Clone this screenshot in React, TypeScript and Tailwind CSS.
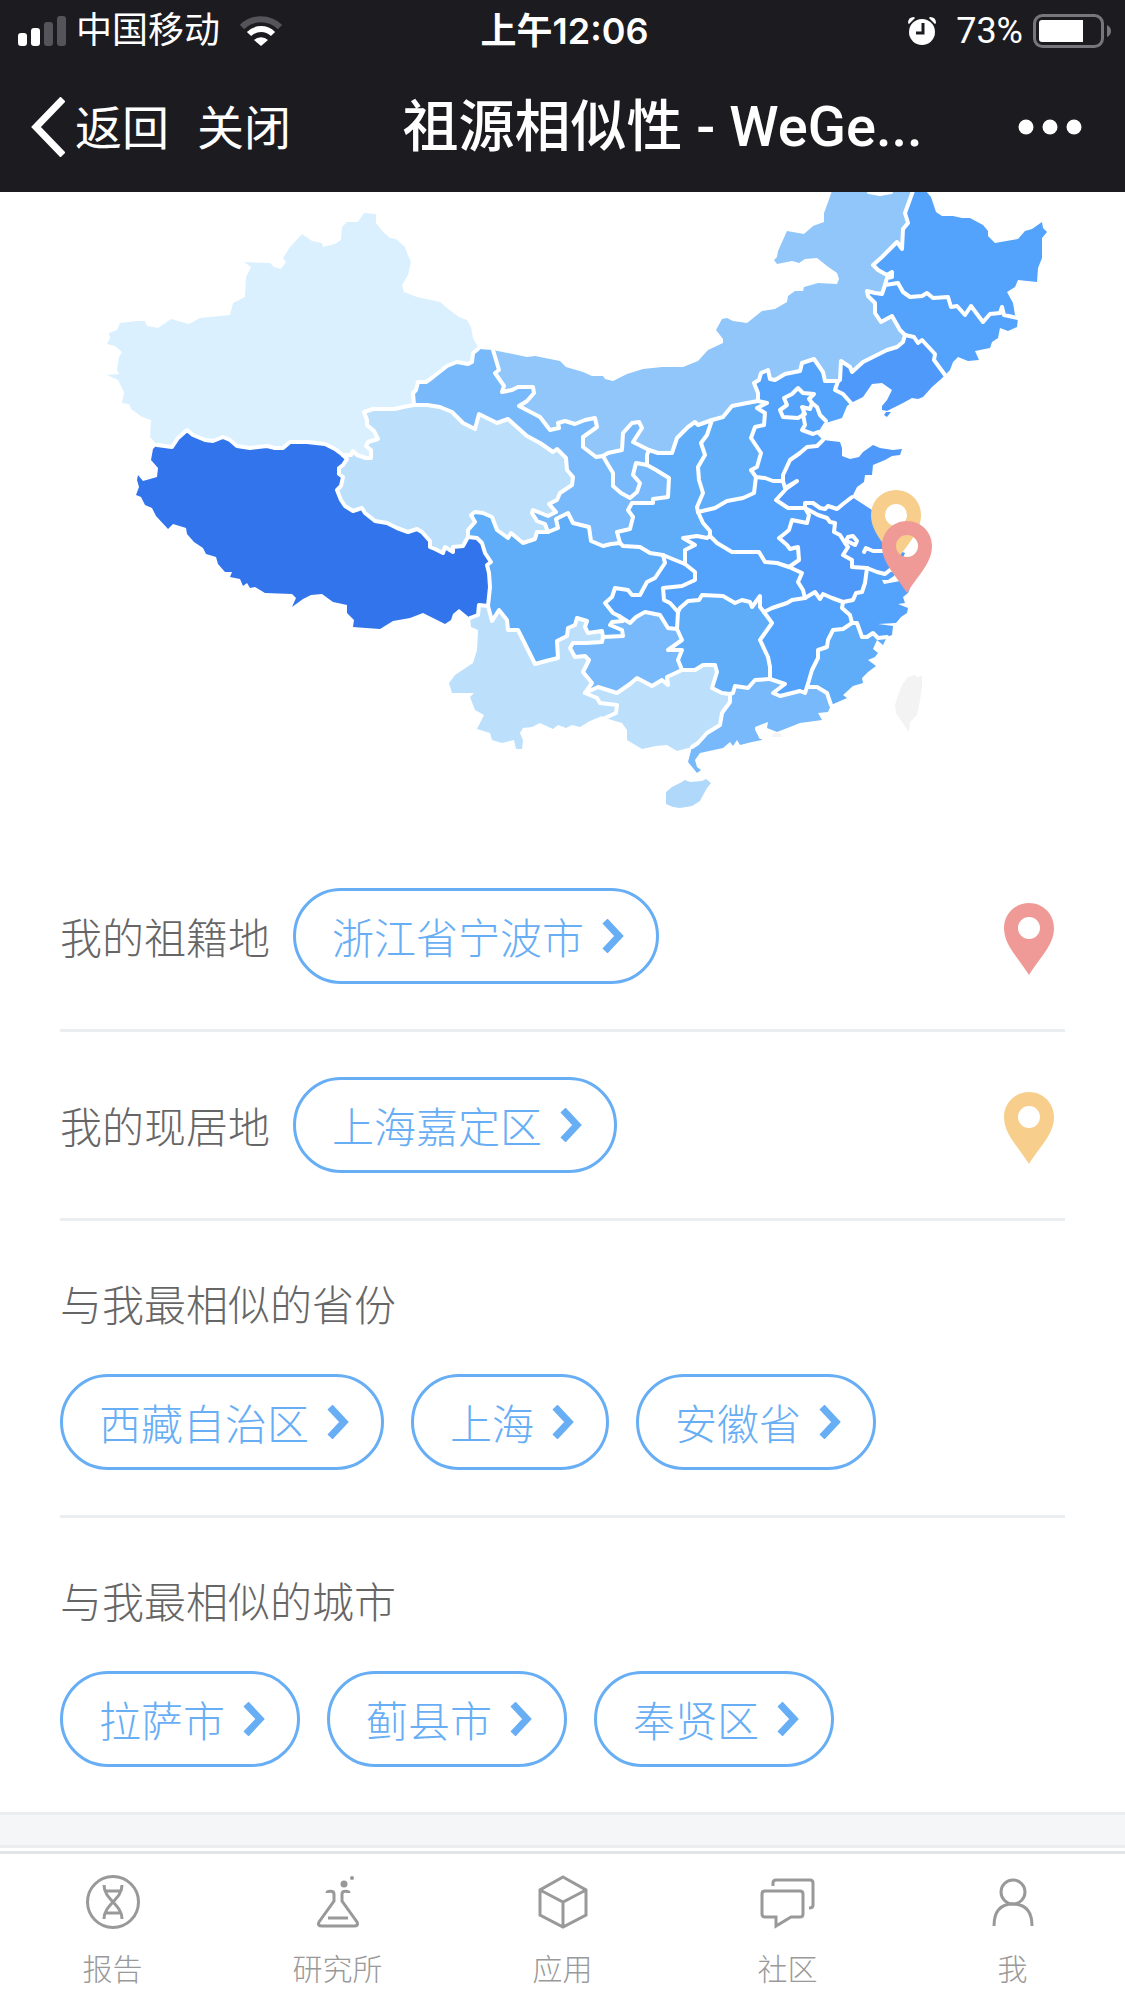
import type { ReactNode } from "react";

type ProvinceShape = {
  name: string;
  fill: string;
  ring: string[];
};

// Shared outlines: every border is written once and reused by both neighbours.
const ARCS: Record<string, string> = {
  "xj-out":
    "157,445 150,437 151,420 142,417 131,409 129,404 122,403 124,392 118,380 107,375 119,374 117,370 119,357 122,352 115,346 107,344 110,338 109,333 117,330 120,323 137,321 145,321 147,326 158,328 171,319 189,324 200,318 230,315 233,303 245,297 246,277 251,267 244,262 270,263 274,267 281,269 286,262 283,258 290,247 302,234 312,241 322,243 323,247 335,244 341,240 342,227 347,222 358,222 364,213 376,214 376,223 383,232 390,238 396,239 405,247 407,253 411,262 408,275 402,285 404,292 417,297 440,302 447,308 459,317 467,320 471,327 473,338 478,347",
  "xj-gs":
    "478,349 473,353 472,362 468,364 457,362 447,366 433,377 426,382 418,382 416,390 413,393 414,405",
  "xj-qh":
    "414,405 403,407 395,409 373,409 364,412 367,420 367,425 374,431 378,439 368,442 366,446 371,450 371,458 366,458 357,455 353,451 351,455 343,455",
  "xj-xz":
    "343,455 335,449 325,444 307,442 290,442 283,448 275,448 267,446 250,448 237,446 230,440 223,437 213,441 205,440 193,435 187,430 178,438 172,447 157,445",
  "xz-out":
    "157,445 153,449 151,460 158,468 157,477 143,481 138,475 137,480 139,487 136,495 141,497 145,505 152,508 156,516 168,529 173,524 186,528 187,534 194,542 203,548 206,554 216,557 218,564 225,572 232,572 230,577 240,579 243,586 247,583 250,588 255,587 265,593 292,594 296,598 292,607 303,599 311,595 322,594 333,602 347,605 347,613 354,620 353,627 366,628 380,629 393,621 410,618 423,613 445,624 451,620 453,614 459,609 470,618",
  "xz-yn": "470,618 478,615 479,605 488,606",
  "xz-sc": "488,606 490,587 489,573 487,565 491,562 485,553 482,543 477,538 468,537",
  "xz-qh":
    "468,537 463,546 453,547 453,552 445,547 443,553 435,549 430,547 430,541 422,532 417,529 408,532 397,528 387,523 375,521 365,513 362,508 353,511 345,506 341,500 337,490 341,486 343,477 339,474 339,468 343,465 347,459 343,455",
  "qh-gs":
    "414,405 427,405 440,407 452,412 463,423 475,429 479,414 497,423 508,419 518,428 527,436 540,443 553,452 557,449 566,458 567,470 573,477 572,485 560,493 557,500 549,504 556,512 548,516 533,510 532,513 537,521 545,524 548,532",
  "qh-sc":
    "548,532 537,532 535,539 523,543 517,538 511,533 508,538 497,530 492,517 483,513 475,512 471,515 475,522 468,530 468,537",
  "gs-sc":
    "548,532 558,528 556,519 568,513 573,523 589,527 591,541 603,546 611,544 620,543",
  "gs-sn":
    "620,543 617,532 630,529 633,517 628,510 632,503 640,503 653,503 653,499 668,497 669,478 656,470 647,465",
  "nx-sn": "647,465 647,455 649,450",
  "nx-gs":
    "647,465 636,463 633,475 640,483 637,492 630,498 621,493 613,486 613,473 607,463 603,456",
  "nm-nx":
    "603,456 608,453 622,450 623,433 632,423 639,422 642,428 633,442 649,450",
  "nm-gs":
    "493,350 499,370 495,373 504,386 502,392 512,390 518,387 533,387 534,393 527,401 519,406 540,417 550,430 559,428 558,423 565,421 575,424 585,420 595,418 597,427 583,437 583,447 596,457 603,456",
  "gs-out": "478,349 493,350",
  "nm-out":
    "493,350 527,357 535,356 560,361 566,367 583,372 592,376 603,376 605,379 613,381 627,374 643,369 662,367 683,367 698,361 708,350 723,343 723,339 716,330 722,319 727,318 733,321 747,323 762,311 775,309 787,302 788,296 795,291 803,291 804,287 818,283 837,284 839,279 837,273 827,266 817,258 805,259 799,263 792,261 777,264 774,260 777,257 778,251 787,231 804,234 813,226 824,222 824,213 827,205 833,188 914,188",
  "nm-hl":
    "914,188 909,202 905,213 908,223 903,229 902,249 897,242 882,257 873,265 878,270 887,275 892,272 892,277 887,278 885,285",
  "hl-jl":
    "885,285 898,283 903,292 910,297 922,296 927,293 933,298 948,297 951,307 957,306 965,315 971,306 983,322 990,314 1000,313 1002,307 1004,315 1018,318",
  "hl-out":
    "914,188 925,190 931,197 936,212 942,216 953,216 962,218 970,218 983,225 988,231 988,236 995,243 1018,239 1025,231 1032,229 1042,222 1043,228 1047,232 1042,238 1042,258 1038,268 1037,282 1018,280 1015,287 1007,292 1013,303 1015,315 1018,318",
  "jl-out":
    "1018,318 1017,327 1008,331 1000,328 998,338 992,342 990,348 975,351 979,360 968,361 958,357 953,362 950,370 945,375",
  "nm-jl":
    "885,285 882,294 875,293 867,291 868,296 875,303 875,313 881,322 892,316 900,330 905,335",
  "jl-ln": "905,335 914,337 918,343 922,340 935,354 934,360 945,375",
  "nm-ln":
    "905,335 903,342 897,347 887,350 873,357 863,362 852,372 850,367 841,361 840,380 838,381",
  "ln-he": "838,381 835,390 843,394 851,403",
  "ln-out":
    "945,375 940,380 932,387 923,397 918,399 912,398 903,403 887,411 882,410 882,406 887,400 892,390 882,383 872,384 863,397 851,403",
  "he-out": "851,403 847,406 842,418 829,422 824,423 817,434 823,440",
  "nm-he":
    "838,381 825,381 823,372 814,359 802,363 800,371 785,374 775,380 770,379 768,370 761,373 759,380 754,383 758,393 758,401",
  "he-sx":
    "758,401 767,403 757,408 765,413 764,425 755,427 751,438 761,453 757,467 751,470 756,477",
  "he-ha": "756,477 765,478 773,481 783,481",
  "he-sd": "783,481 783,475 790,460 800,453 807,447 817,446 823,440",
  "sd-ha": "783,481 785,488 797,481 787,488 776,500 788,508 805,508",
  "sd-js":
    "805,508 805,503 813,503 820,508 825,509 828,506 837,509 843,504 852,497",
  "sd-out":
    "823,440 840,442 842,448 842,456 850,459 859,457 863,452 873,445 880,448 893,450 902,449 900,455 892,456 885,460 873,465 872,475 865,475 864,482 857,487 852,497",
  "js-out":
    "852,497 872,510 878,520 885,535 892,548 900,551 905,553 902,560 898,569",
  "js-ah":
    "805,508 818,515 827,518 830,522 835,523 834,532 840,535 845,543 848,547 843,555 852,560 852,567 867,568",
  "js-zj": "867,568 877,572 885,574 890,570 898,569",
  "ha-ah":
    "805,508 809,515 807,523 792,520 789,530 783,535 779,538 787,545 790,549 798,547 799,560 789,567",
  "ha-hb":
    "789,567 777,563 765,562 759,552 750,552 732,552 717,543 710,536",
  "sx-ha": "756,477 754,493 743,498 727,501 715,508 698,512",
  "sn-ha": "698,512 703,523 710,531 710,536",
  "sx-sn":
    "698,512 697,507 703,493 699,480 698,467 705,455 701,443 707,435 712,420",
  "nm-sx": "758,401 747,403 732,406 723,417 712,420",
  "nm-sn": "712,420 698,425 695,422 688,427 677,438 672,453 658,453 649,450",
  "sn-hb": "710,536 707,538 697,536 683,538 695,545 685,550 685,564",
  "sn-cq": "685,564 675,560 663,555",
  "sn-sc": "663,555 650,553 640,547 623,546 620,543",
  "sc-cq":
    "663,555 665,563 655,578 647,582 640,595 632,595 628,590 615,588 612,597 605,603 613,613 619,616",
  "sc-gz": "619,616 623,621 612,622 610,625 622,630 623,636 603,637",
  "sc-yn":
    "603,637 602,631 588,633 585,627 587,621 577,618 575,625 568,628 567,636 557,641 558,658 546,661 535,664 528,650 518,630 508,630 507,620 499,610 492,621 488,606",
  "cq-gz": "619,616 630,623 636,617 645,612 660,615 668,628 677,629",
  "cq-hn": "677,629 678,612",
  "cq-hb": "685,564 695,572 695,580 682,586 663,588 664,600 670,603 678,612",
  "hb-hn":
    "678,612 680,608 688,601 699,600 702,595 723,596 735,603 742,600 750,602 752,607 760,596 760,607 764,612",
  "hb-jx": "764,612 772,608 787,603 792,600 805,598",
  "hb-ah": "789,567 802,573 798,582 803,590 805,598",
  "ah-jx": "805,598 815,592 820,599 823,594 832,598 843,602",
  "ah-zj": "867,568 865,583 862,592 856,593 853,600 843,602",
  "jx-zj": "843,602 842,608 850,615 852,623",
  "zj-out":
    "898,569 894,576 888,580 882,580 884,584 895,582 905,580 910,588 908,593 903,597 905,603 898,604 908,608 907,613 901,617 896,623 878,624 893,626 892,635 887,637",
  "zj-fj": "852,623 857,623 862,637 867,637 873,633 878,638 887,637",
  "jx-fj":
    "852,623 843,629 833,630 828,640 827,647 818,650 818,658 812,670 807,687",
  "fj-out":
    "887,637 883,645 877,640 873,649 878,653 875,657 868,660 876,666 868,672 862,678 863,683 853,686 843,695 847,698 831,705",
  "fj-gd": "807,687 817,687 827,693 831,705",
  "jx-gd": "807,687 805,693 800,691 780,696 773,693 785,684 770,679",
  "hn-jx": "764,612 772,623 760,640 768,657 770,667 770,679",
  "hn-gd": "770,679 755,680 748,688 735,686 733,693 730,694",
  "hn-gx": "730,694 722,693 712,688 717,672 715,665 703,665 695,670 682,670",
  "gz-hn": "677,629 682,640 668,650 682,650 678,660 682,670",
  "gz-gx":
    "682,670 667,677 668,685 662,680 652,686 637,678 630,684 617,693 598,687 585,693",
  "gz-yn":
    "603,637 602,642 586,643 573,643 570,648 575,657 585,656 589,660 583,672 592,683 585,693",
  "yn-gx": "585,693 597,698 600,703 617,705 616,713 605,718",
  "yn-out":
    "470,618 471,627 478,630 477,650 473,663 455,675 449,683 452,693 474,693 470,697 475,710 484,715 477,729 490,733 492,740 502,743 514,740 516,749 522,749 523,740 520,733 523,728 532,727 540,723 553,729 558,725 566,728 572,725 580,727 590,721 602,716 605,718",
  "gx-out":
    "605,718 622,723 627,730 627,740 642,749 656,746 667,745 677,751 692,747",
  "gx-gd": "730,694 730,702 722,713 720,725 707,733 698,743 692,747",
  "gd-out":
    "831,705 828,712 818,713 822,720 800,723 790,727 777,732 767,728 768,722 755,727 762,740 752,742 740,745 737,740 733,746 730,742 723,748 700,753 695,760 697,767 701,770 697,773 688,762 692,747",
};

const PROVINCES: ProvinceShape[] = [
  { name: "新疆", fill: "#daf0fe", ring: ["xj-out", "xj-gs", "xj-qh", "xj-xz"] },
  { name: "西藏", fill: "#3274eb", ring: ["xz-out", "xz-yn", "xz-sc", "xz-qh", "xj-xz"] },
  { name: "青海", fill: "#bce0fc", ring: ["-xj-qh", "qh-gs", "qh-sc", "xz-qh"] },
  { name: "甘肃", fill: "#77b9fa", ring: ["-xj-gs", "gs-out", "nm-gs", "-nx-gs", "-gs-sn", "-gs-sc", "-qh-gs"] },
  { name: "宁夏", fill: "#77b9fa", ring: ["nx-gs", "nm-nx", "-nx-sn"] },
  {
    name: "内蒙古",
    fill: "#91c6fa",
    ring: ["nm-out", "nm-hl", "nm-jl", "nm-ln", "nm-he", "nm-sx", "nm-sn", "-nm-nx", "-nm-gs"],
  },
  { name: "黑龙江", fill: "#53a2fb", ring: ["hl-out", "-hl-jl", "-nm-hl"] },
  { name: "吉林", fill: "#53a2fb", ring: ["hl-jl", "jl-out", "-jl-ln", "-nm-jl"] },
  { name: "辽宁", fill: "#4f99fb", ring: ["jl-ln", "ln-out", "-ln-he", "-nm-ln"] },
  { name: "河北", fill: "#53a2fb", ring: ["ln-he", "he-out", "-he-sd", "-he-ha", "-he-sx", "-nm-he"] },
  { name: "山西", fill: "#5facf9", ring: ["he-sx", "sx-ha", "sx-sn", "-nm-sx"] },
  { name: "山东", fill: "#4f99fb", ring: ["sd-out", "-sd-js", "-sd-ha", "he-sd"] },
  { name: "河南", fill: "#53a2fb", ring: ["he-ha", "sd-ha", "ha-ah", "ha-hb", "-sn-ha", "-sx-ha"] },
  { name: "江苏", fill: "#4f99fb", ring: ["js-out", "-js-zj", "-js-ah", "sd-js"] },
  { name: "安徽", fill: "#4f99fb", ring: ["js-ah", "ah-zj", "-ah-jx", "-hb-ah", "-ha-ah"] },
  {
    name: "陕西",
    fill: "#5facf9",
    ring: ["-sx-sn", "sn-ha", "sn-hb", "sn-cq", "sn-sc", "gs-sn", "nx-sn", "-nm-sn"],
  },
  { name: "湖北", fill: "#53a2fb", ring: ["ha-hb", "sn-hb", "cq-hb", "hb-hn", "hb-jx", "-hb-ah"] },
  { name: "重庆", fill: "#53a2fb", ring: ["sn-cq", "sc-cq", "cq-gz", "cq-hn", "-cq-hb"] },
  { name: "四川", fill: "#5facf9", ring: ["gs-sc", "-sn-sc", "sc-cq", "sc-gz", "sc-yn", "xz-sc", "-qh-sc"] },
  { name: "贵州", fill: "#77b9fa", ring: ["cq-gz", "gz-hn", "gz-gx", "-gz-yn", "-sc-gz"] },
  { name: "云南", fill: "#bce0fc", ring: ["yn-out", "-yn-gx", "-gz-yn", "sc-yn", "-xz-yn"] },
  { name: "湖南", fill: "#5facf9", ring: ["hb-hn", "hn-jx", "hn-gd", "hn-gx", "-gz-hn", "cq-hn"] },
  { name: "江西", fill: "#53a2fb", ring: ["ah-jx", "jx-zj", "jx-fj", "jx-gd", "-hn-jx", "hb-jx"] },
  { name: "浙江", fill: "#53a2fb", ring: ["zj-out", "-zj-fj", "-jx-zj", "-ah-zj", "js-zj"] },
  { name: "福建", fill: "#5facf9", ring: ["zj-fj", "fj-out", "-fj-gd", "-jx-fj"] },
  { name: "广西", fill: "#bce0fc", ring: ["hn-gx", "gz-gx", "yn-gx", "gx-out", "-gx-gd"] },
  { name: "广东", fill: "#77b9fa", ring: ["fj-gd", "gd-out", "-gx-gd", "-hn-gd", "-jx-gd"] },
];

const ringPoints = (ring: string[]) =>
  ring
    .map((key) =>
      key.startsWith("-")
        ? ARCS[key.slice(1)].split(" ").reverse().join(" ")
        : ARCS[key]
    )
    .join(" ");

const PIN_PATH =
  "M25 0C11 0 0 11 0 25C0 42 13 53 25 72C37 53 50 42 50 25C50 11 39 0 25 0ZM25 14A11 11 0 1 1 25 36A11 11 0 1 1 25 14Z";

const ChinaMap = () => (
  <svg
    viewBox="0 192 1125 651"
    className="block w-full bg-white"
    role="img"
    aria-label="祖源相似性地图"
  >
    {PROVINCES.map(({ name, fill, ring }) => (
      <polygon key={name} points={ringPoints(ring)} fill={fill} />
    ))}
    <polygon
      fill="#b0d8fb"
      points="666,792 672,787 680,783 685,780 690,782 702,781 706,779 711,783 707,788 702,797 700,801 692,806 680,808 673,807 666,804"
    />
    <polygon
      fill="#f3f3f3"
      points="908,677 915,675 917,677 922,676 922,687 920,700 917,715 910,722 909,732 902,722 896,713 895,705 898,695 902,685"
    />
    <polygon fill="#f5f5f5" points="771,737 783,737 780,733 774,733" />
    <polygon fill="#4f99fb" points="886,412 891,412 887,417 884,415" />
    <g
      fill="none"
      stroke="#fff"
      strokeWidth="4"
      strokeLinejoin="round"
      strokeLinecap="round"
    >
      {Object.entries(ARCS)
        .filter(([key]) => !key.endsWith("-out"))
        .map(([key, points]) => (
          <polyline key={key} points={points} />
        ))}
      <polyline points="798,388 792,394 784,398 787,405 780,410 783,417 798,418 805,414 802,407 810,409 812,403 809,399 814,394 803,393 798,388" />
      <polyline points="812,403 817,407 820,415 826,421" />
      <polyline points="803,414 805,425 802,430 813,434 818,432" />
      <polyline points="869,192 880,194 891,192" />
      <polyline points="845,543 848,537 853,536 857,541 855,545 849,542" />
      <polyline points="864,552 866,548 873,551 884,551" />
      <polyline points="757,729 761,737" />
    </g>
    <path transform="translate(871 490)" d={PIN_PATH} fill="#f7ce8b" />
    <path transform="translate(882 521)" d={PIN_PATH} fill="#ef9a97" />
  </svg>
);

const Pin = ({ color, label }: { color: string; label: string }) => (
  <svg
    viewBox="0 0 50 72"
    className="h-[72px] w-[50px]"
    role="img"
    aria-label={label}
  >
    <path d={PIN_PATH} fill={color} />
  </svg>
);

const Pill = ({ children }: { children: ReactNode }) => (
  <button
    type="button"
    className="flex h-24 items-center gap-[18px] rounded-full border-3 border-[#67aef5] pr-8 pl-9 text-[42px] font-light whitespace-nowrap text-[#67aef5]"
  >
    <span className="pt-[6px]">{children}</span>
    <svg viewBox="0 0 22 34" className="h-[34px] w-[22px]" fill="none">
      <path d="M3 2L17 17L3 32" stroke="currentColor" strokeWidth="7" />
    </svg>
  </button>
);

const PlaceRow = ({
  label,
  place,
  pinColor,
}: {
  label: string;
  place: string;
  pinColor: string;
}) => (
  <div className="flex items-center border-b-3 border-[#ebeef1] py-[45px]">
    <h2 className="mr-[23px] pt-[6px] text-[42px] font-light text-[#666]">
      {label}
    </h2>
    <Pill>{place}</Pill>
    <div className="mr-[11px] ml-auto pt-[6px]">
      <Pin color={pinColor} label={label} />
    </div>
  </div>
);

const SimilarSection = ({
  title,
  places,
  className = "",
}: {
  title: string;
  places: string[];
  className?: string;
}) => (
  <section className={`pt-[54px] pb-[45px] ${className}`}>
    <h2 className="mb-9 text-[42px] leading-[63px] font-light text-[#666]">
      {title}
    </h2>
    <div className="flex flex-wrap gap-[27px]">
      {places.map((place) => (
        <Pill key={place}>{place}</Pill>
      ))}
    </div>
  </section>
);

const StatusBar = () => (
  <div className="grid h-[62px] grid-cols-[1fr_auto_1fr] items-center pr-[14px] pl-[18px] text-[36px] leading-none">
    <div className="flex items-center">
      <svg viewBox="0 0 48 30" className="h-[30px] w-12" fill="#fff">
        <rect y="17" width="9" height="13" rx="3" />
        <rect x="13" y="12" width="9" height="18" rx="3" />
        <rect x="26" y="6" width="9" height="24" rx="3" fill="#55545a" />
        <rect x="39" width="9" height="30" rx="3" fill="#55545a" />
      </svg>
      <span className="ml-[10px]">中国移动</span>
      <svg viewBox="0 0 42 30" className="ml-5 h-[30px] w-[42px]" fill="none">
        <path d="M2 11A27 27 0 0 1 40 11" stroke="#55545a" strokeWidth="6" />
        <path d="M9 18A17 17 0 0 1 33 18" stroke="#fff" strokeWidth="6" />
        <path d="M21 30L14 24A10 10 0 0 1 28 24Z" fill="#fff" />
      </svg>
    </div>
    <span className="font-[Inter,'Noto_Sans_CJK_SC',sans-serif] font-semibold">
      上午12:06
    </span>
    <div className="flex items-center justify-end">
      <svg viewBox="0 0 28 28" className="h-7 w-7">
        <circle cx="14" cy="15" r="13" fill="#fff" />
        <path d="M0 6Q0 0 6 0L7 1L1 7ZM28 6Q28 0 22 0L21 1L27 7Z" fill="#fff" />
        <path d="M15 6V16H8" fill="none" stroke="#1c1b20" strokeWidth="3" />
      </svg>
      <span className="ml-5">73%</span>
      <svg viewBox="0 0 78 34" className="ml-[10px] h-[34px] w-[78px]">
        <rect x="1.5" y="1.5" width="68" height="31" rx="8" fill="none" stroke="#77767a" strokeWidth="3" />
        <path d="M74 11Q78 13 78 17T74 23Z" fill="#77767a" />
        <path d="M9 6H50V28H9Q6 28 6 25V9Q6 6 9 6Z" fill="#fff" />
      </svg>
    </div>
  </div>
);

const NavBar = () => (
  <div className="flex h-[130px] items-center pr-[43px] pl-[31px]">
    <button type="button" className="flex items-center text-[47px]">
      <svg viewBox="0 0 34 60" className="h-[60px] w-[34px]" fill="none">
        <path d="M32 2L5 30L32 58" stroke="#fff" strokeWidth="7" />
      </svg>
      <span className="ml-[10px] pt-1">返回</span>
    </button>
    <button type="button" className="ml-7 pt-1 text-[47px]">
      关闭
    </button>
    <h1 className="flex-1 pl-4 text-center text-[56px] font-medium whitespace-nowrap">
      祖源相似性 - WeGe...
    </h1>
    <button type="button" aria-label="更多">
      <svg viewBox="0 0 64 16" className="h-4 w-16" fill="#fff">
        <circle cx="8" cy="8" r="7.5" />
        <circle cx="32" cy="8" r="7.5" />
        <circle cx="56" cy="8" r="7.5" />
      </svg>
    </button>
  </div>
);

const TABS: { label: string; icon: ReactNode }[] = [
  {
    label: "报告",
    icon: (
      <>
        <circle cx="28" cy="28" r="25.5" />
        <path d="M19 11C19 26 37 30 37 45M37 11C37 26 19 30 19 45M21 17H35M21 39H35" />
      </>
    ),
  },
  {
    label: "研究所",
    icon: (
      <>
        <path d="M17 19C17 17 24 16 24 20V27L9 48Q7 52 12 52H44Q49 52 47 48L32 27V20C32 16 39 17 39 19M18 44H38" />
        <circle cx="34" cy="10" r="3.5" fill="#999" stroke="none" />
        <circle cx="42" cy="4" r="2" fill="#999" stroke="none" />
      </>
    ),
  },
  {
    label: "应用",
    icon: <path d="M28 3L51 16V41L28 53L5 41V16ZM5 16L28 28L51 16M28 28V53" />,
  },
  {
    label: "社区",
    icon: (
      <>
        <path d="M5 17H40Q43 17 43 20V40Q43 43 40 43H31L16 52V43H5Q2 43 2 40V20Q2 17 5 17Z" />
        <path d="M13 12V9Q13 6 16 6H50Q53 6 53 9V31Q53 34 49 34" />
      </>
    ),
  },
  {
    label: "我",
    icon: (
      <>
        <circle cx="28" cy="18" r="12" />
        <path d="M9 52C9 36 17 30 28 30S47 36 47 52" />
      </>
    ),
  },
];

const TabBar = () => (
  <nav className="mt-[3px] grid grid-cols-5 border-t-3 border-[#e1e5e8] bg-white pt-5 pb-2">
    {TABS.map(({ label, icon }) => (
      <a
        key={label}
        href="#"
        className="flex flex-col items-center gap-[17px] text-[30px] font-light text-[#999]"
      >
        <svg
          viewBox="0 0 56 56"
          className="h-14 w-14"
          fill="none"
          stroke="currentColor"
          strokeWidth="3"
        >
          {icon}
        </svg>
        <span className="leading-[46px]">{label}</span>
      </a>
    ))}
  </nav>
);

export default function App() {
  return (
    <div className="min-h-screen bg-white font-[Roboto,'Noto_Sans_CJK_SC',sans-serif]">
      <header className="bg-[#1c1b20] text-white">
        <StatusBar />
        <NavBar />
      </header>
      <main>
        <ChinaMap />
        <div className="px-[60px]">
          <PlaceRow label="我的祖籍地" place="浙江省宁波市" pinColor="#ef9a97" />
          <PlaceRow label="我的现居地" place="上海嘉定区" pinColor="#f7ce8b" />
          <SimilarSection
            title="与我最相似的省份"
            places={["西藏自治区", "上海", "安徽省"]}
            className="border-b-3 border-[#ebeef1]"
          />
          <SimilarSection
            title="与我最相似的城市"
            places={["拉萨市", "蓟县市", "奉贤区"]}
          />
        </div>
        <div className="h-9 border-y-3 border-[#ebedef] bg-[#f5f6f8]" />
      </main>
      <TabBar />
    </div>
  );
}
